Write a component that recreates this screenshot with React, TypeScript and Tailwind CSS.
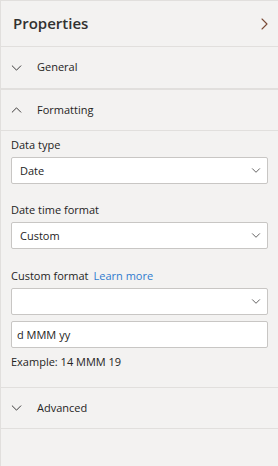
import { useState } from "react";

function ChevronDown({ className = "" }: { className?: string }) {
  return (
    <svg viewBox="0 0 12 7" className={className} fill="none" stroke="currentColor" strokeWidth="1.1">
      <path strokeLinecap="round" strokeLinejoin="round" d="M1 1l5 5 5-5" />
    </svg>
  );
}

function ChevronUp({ className = "" }: { className?: string }) {
  return (
    <svg viewBox="0 0 12 7" className={className} fill="none" stroke="currentColor" strokeWidth="1.1">
      <path strokeLinecap="round" strokeLinejoin="round" d="M1 6l5-5 5 5" />
    </svg>
  );
}

function Select({ value }: { value: string }) {
  return (
    <div className="flex h-[27px] items-center justify-between rounded-[2px] border border-[#c8c6c4] bg-white pl-2 pr-[6px]">
      <span className="text-[11px] text-[#252423]">{value}</span>
      <ChevronDown className="h-[5px] w-[10px] text-[#3b3a39]" />
    </div>
  );
}

function SectionRow({ label, open, h = "h-[41px]" }: { label: string; open?: boolean; h?: string }) {
  return (
    <div className={`flex items-center pl-[10px] ${h}`}>
      {open ? (
        <ChevronUp className="h-[6px] w-[11px] text-[#323130]" />
      ) : (
        <ChevronDown className="h-[6px] w-[11px] text-[#323130]" />
      )}
      <span className="ml-[15px] text-[11px] text-[#252423]">{label}</span>
    </div>
  );
}

export default function App() {
  const [format, setFormat] = useState("d MMM yy");

  return (
    <div className="h-[466px] w-[278px] overflow-hidden border-l border-t border-[#e1dfdd] bg-[#f3f2f1] font-['Segoe_UI','Open_Sans',sans-serif] text-[#252423]">
      <div className="flex h-[46px] items-center justify-between border-b border-[#e1dfdd] pl-3 pr-[10px]">
        <h1 className="text-[15px] font-semibold text-[#323130]">Properties</h1>
        <svg viewBox="0 0 7 12" className="h-[12px] w-[7px] text-[#7a4a36]" fill="none" stroke="currentColor" strokeWidth="1.1">
          <path strokeLinecap="round" strokeLinejoin="round" d="M1 1l5 5-5 5" />
        </svg>
      </div>

      <div className="border-b-2 border-[#e1dfdd]">
        <SectionRow label="General" />
      </div>

      <div className="border-b border-[#e1dfdd]">
        <SectionRow label="Formatting" open h="h-[40px]" />
      </div>

      <div className="flex flex-col px-[10px] pb-[16px] pt-[5px] text-[11px] leading-[18px]">
        <label className="mb-[3px]">Data type</label>
        <Select value="Date" />

        <label className="mb-[3px] mt-[17px]">Date time format</label>
        <Select value="Custom" />

        <div className="mb-[3px] mt-[18px] flex items-baseline gap-[5px]">
          <span>Custom format</span>
          <span className="text-[#2f7bcf]">Learn more</span>
        </div>
        <Select value="" />
        <input
          value={format}
          onChange={(e) => setFormat(e.target.value)}
          className="mt-[6px] h-[27px] rounded-[2px] border border-[#c8c6c4] bg-white px-[5px] text-[11px] text-[#252423] outline-none"
        />
        <p className="mt-[5px]">Example: 14 MMM 19</p>
      </div>

      <div className="border-y border-[#e1dfdd]">
        <SectionRow label="Advanced" h="h-[40px]" />
      </div>
    </div>
  );
}
